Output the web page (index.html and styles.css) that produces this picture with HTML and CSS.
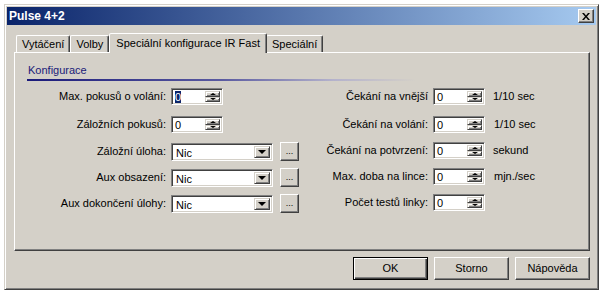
FILE: index.html
```html
<!DOCTYPE html>
<html>
<head>
<meta charset="utf-8">
<link rel="stylesheet" href="styles.css">
</head>
<body>
<div class="window">
  <div class="titlebar">
    <span class="title">Pulse 4+2</span>
    <div class="close"><svg width="8" height="7" viewBox="0 0 8 7"><path d="M0 0h2l2 2.5L6 0h2L5 3.5 8 7H6L4 4.5 2 7H0l3-3.5z" fill="#000"/></svg></div>
  </div>
  <div class="content">
    <div class="tabs">
      <div class="tab">Vytáčení</div>
      <div class="tab">Volby</div>
      <div class="tab active">Speciální konfigurace IR Fast</div>
      <div class="tab">Speciální</div>
    </div>
    <div class="panel">
      <div class="group-title">Konfigurace</div>
      <div class="group-line"></div>
      <div class="form">
        <div class="lbl">Max. pokusů o volání:</div>
        <div class="cell"><div class="spin"><div class="val"><span class="sel">0</span></div><div class="btns"><div class="sb"><i class="up"></i></div><div class="sb"><i class="down"></i></div></div></div></div>
        <div class="lbl">Čekání na vnější</div>
        <div class="cell"><div class="spin"><div class="val">0</div><div class="btns"><div class="sb"><i class="up"></i></div><div class="sb"><i class="down"></i></div></div></div></div>
        <div class="unit">1/10 sec</div>

        <div class="lbl">Záložních pokusů:</div>
        <div class="cell"><div class="spin"><div class="val">0</div><div class="btns"><div class="sb"><i class="up"></i></div><div class="sb"><i class="down"></i></div></div></div></div>
        <div class="lbl">Čekání na volání:</div>
        <div class="cell"><div class="spin"><div class="val">0</div><div class="btns"><div class="sb"><i class="up"></i></div><div class="sb"><i class="down"></i></div></div></div></div>
        <div class="unit u2">1/10 sec</div>

        <div class="lbl tall">Záložní úloha:</div>
        <div class="cell"><div class="combo"><div class="val">Nic</div><div class="dd"><i class="arrow"></i></div></div><div class="more">...</div></div>
        <div class="lbl">Čekání na potvrzení:</div>
        <div class="cell"><div class="spin"><div class="val">0</div><div class="btns"><div class="sb"><i class="up"></i></div><div class="sb"><i class="down"></i></div></div></div></div>
        <div class="unit">sekund</div>

        <div class="lbl tall">Aux obsazení:</div>
        <div class="cell"><div class="combo"><div class="val">Nic</div><div class="dd"><i class="arrow"></i></div></div><div class="more">...</div></div>
        <div class="lbl">Max. doba na lince:</div>
        <div class="cell"><div class="spin"><div class="val">0</div><div class="btns"><div class="sb"><i class="up"></i></div><div class="sb"><i class="down"></i></div></div></div></div>
        <div class="unit u2">mjn./sec</div>

        <div class="lbl tall">Aux dokončení úlohy:</div>
        <div class="cell"><div class="combo"><div class="val">Nic</div><div class="dd"><i class="arrow"></i></div></div><div class="more">...</div></div>
        <div class="lbl">Počet testů linky:</div>
        <div class="cell"><div class="spin"><div class="val">0</div><div class="btns"><div class="sb"><i class="up"></i></div><div class="sb"><i class="down"></i></div></div></div></div>
        <div class="unit"></div>
      </div>
    </div>
    <div class="buttons">
      <div class="btn default">OK</div>
      <div class="btn">Storno</div>
      <div class="btn">Nápověda</div>
    </div>
  </div>
</div>
</body>
</html>
```
FILE: styles.css
```css
* { box-sizing: border-box; }
body {
  margin: 0;
  background: #fff;
  font-family: "Liberation Sans", Arial, sans-serif;
  font-size: 11px;
  color: #000;
}
.window {
  margin: 4px 0 0 4px;
  width: 595px;
  height: 286px;
  background: #d4d0c8;
  border: 1px solid;
  border-color: #d4d0c8 #404040 #404040 #d4d0c8;
  box-shadow: inset 1px 1px #fff, inset -1px -1px #808080;
  padding: 2px;
  display: flex;
  flex-direction: column;
}
.titlebar {
  height: 18px;
  flex: none;
  background: linear-gradient(to right, #0a246a, #a6caf0);
  display: flex;
  align-items: center;
  justify-content: space-between;
  padding: 0 2px 0 2px;
}
.title {
  color: #fff;
  font-weight: bold;
  font-size: 12px;
}
.close {
  width: 16px;
  height: 14px;
  background: #d4d0c8;
  border: 1px solid;
  border-color: #fff #404040 #404040 #fff;
  box-shadow: inset -1px -1px #808080;
  display: flex;
  align-items: center;
  justify-content: center;
}
.content {
  flex: 1;
  padding: 8px 6px 7px 7px;
  display: flex;
  flex-direction: column;
}
.tabs {
  display: flex;
  align-items: flex-end;
  height: 19px;
  padding-left: 2px;
}
.tab {
  height: 17px;
  padding: 0 5px;
  border: 1px solid;
  border-bottom: 0;
  border-color: #fff #404040 transparent #fff;
  border-radius: 2px 2px 0 0;
  box-shadow: inset -1px 0 #808080;
  line-height: 16px;
  white-space: nowrap;
}
.tab.active {
  height: 20px;
  margin: 0 -1px -1px 0;
  padding: 0 6px 0 6px;
  line-height: 18px;
  background: #d4d0c8;
  position: relative;
  z-index: 1;
}
.panel {
  height: 199px;
  border: 1px solid;
  border-color: #fff #404040 #404040 #fff;
  box-shadow: inset -1px -1px #808080;
  padding: 11px 6px 0 5px;
}
.group-title {
  margin-left: 8px;
  line-height: 13px;
  color: #1a1a78;
}
.group-line {
  height: 2px;
  margin: 2px 0 0 7px;
  background: linear-gradient(to right, #1a1a7a 0%, #5a5aa0 35%, #b4b2cc 55%, #d4d0c8 70%);
}
.form {
  margin-top: 7px;
  display: grid;
  grid-template-columns: 151px 128px 134px 52px auto;
  grid-template-rows: 28px 26px 26px 26px 26px;
  align-items: start;
}
.lbl {
  text-align: right;
  padding-right: 5px;
  line-height: 17px;
  white-space: nowrap;
}
.lbl.tall { line-height: 18px; }
.unit {
  padding-left: 8px;
  line-height: 17px;
}
.unit.u2 { padding-left: 9px; }
.cell {
  display: flex;
  align-items: center;
}
.spin, .combo {
  display: flex;
  background: #fff;
  border: 1px solid;
  border-color: #808080 #fff #fff #808080;
  box-shadow: inset 1px 1px #404040, inset -1px -1px #d4d0c8;
  padding: 2px;
}
.spin { width: 52px; height: 17px; }
.combo { width: 102px; height: 18px; }
.val {
  flex: 1;
  padding-left: 1px;
  line-height: 13px;
}
.combo .val { line-height: 14px; padding-left: 2px; }
.sel {
  background: #0a246a;
  color: #fff;
}
.btns {
  width: 15px;
  display: flex;
  flex-direction: column;
}
.sb {
  flex: 1;
  background: #d4d0c8;
  border: 1px solid;
  border-color: #d4d0c8 #404040 #404040 #d4d0c8;
  box-shadow: inset 1px 1px #fff, inset -1px -1px #808080;
  display: flex;
  align-items: center;
  justify-content: center;
}
.up, .down, .arrow {
  display: block;
  width: 0;
  height: 0;
  border-left: 3px solid transparent;
  border-right: 3px solid transparent;
}
.up { border-bottom: 2px solid #000; }
.down { border-top: 2px solid #000; }
.dd {
  width: 16px;
  background: #d4d0c8;
  border: 1px solid;
  border-color: #d4d0c8 #404040 #404040 #d4d0c8;
  box-shadow: inset 1px 1px #fff, inset -1px -1px #808080;
  display: flex;
  align-items: center;
  justify-content: center;
}
.arrow {
  border-left-width: 4px;
  border-right-width: 4px;
  border-top: 4px solid #000;
}
.more {
  width: 19px;
  height: 19px;
  margin-left: 7px;
  background: #d4d0c8;
  border: 1px solid;
  border-color: #fff #404040 #404040 #fff;
  box-shadow: inset -1px -1px #808080;
  font-size: 9px;
  text-align: center;
  line-height: 17px;
}
.buttons {
  margin-top: 6px;
  display: flex;
  justify-content: flex-end;
  gap: 6px;
}
.btn {
  width: 75px;
  height: 23px;
  background: #d4d0c8;
  border: 1px solid;
  border-color: #fff #404040 #404040 #fff;
  box-shadow: inset -1px -1px #808080;
  text-align: center;
  line-height: 20px;
}
.btn.default {
  border-color: #000;
  box-shadow: inset 1px 1px #fff, inset -1px -1px #404040, inset -2px -2px #808080;
}
```
